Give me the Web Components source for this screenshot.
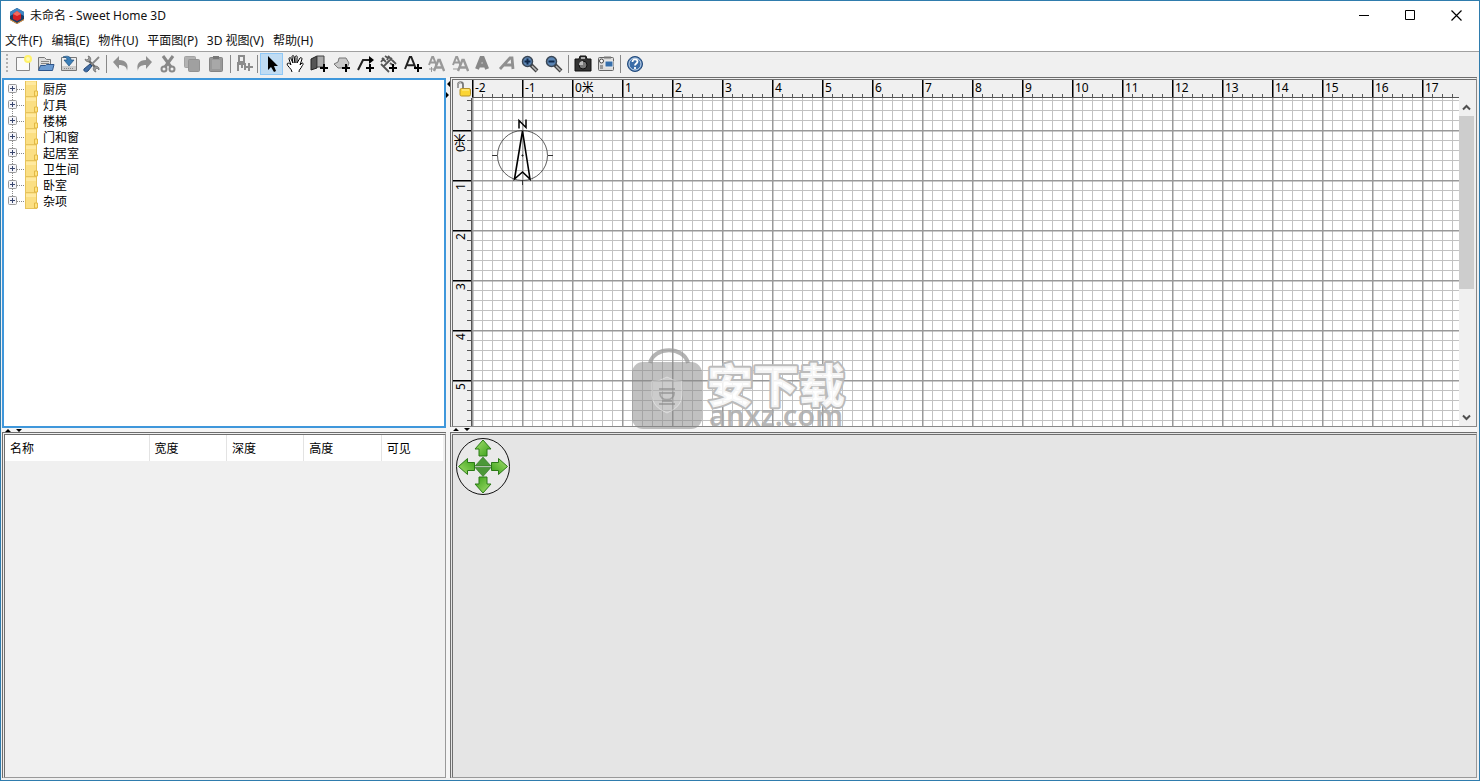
<!DOCTYPE html>
<html lang="zh-CN">
<head>
<meta charset="utf-8">
<title>未命名 - Sweet Home 3D</title>
<style>
html,body{margin:0;height:100%}
body{font:12px/16px "Noto Sans","Noto Sans CJK SC",sans-serif;color:#111;background:#fff}
</style>
</head>
<body>
<home-window>
  <title-bar slot="title">未命名 - Sweet Home 3D</title-bar>
  <menu-bar slot="menu"></menu-bar>
  <tool-bar slot="tools"></tool-bar>
  <catalog-tree slot="catalog"></catalog-tree>
  <furniture-table slot="furniture"></furniture-table>
  <plan-view slot="plan"></plan-view>
  <home-view slot="view"></home-view>
</home-window>
<script>
const define = (name, html) => customElements.define(name, class extends HTMLElement {
  constructor() {
    super();
    const t = document.createElement('template');
    t.innerHTML = `<style>*{box-sizing:border-box}button{font:inherit;color:inherit;border:0;padding:0;background:none}svg{display:block}</style>` + html;
    this.attachShadow({mode: 'open'}).append(t.content.cloneNode(true));
  }
});

const plus = (x, y, c = '#000') => `<path d="M${x-4} ${y}h8M${x} ${y-4}v8" stroke="${c}" stroke-width="2" fill="none"/>`;
const letterA = (x, y, s, c, w = 2.4) => `<path d="M${x} ${y}l${s*.4} ${-s}h${s*.12}l${s*.4} ${s}M${x+s*.2} ${y-s*.32}h${s*.54}" fill="none" stroke="${c}" stroke-width="${w}"/>`;
const magnifier = sign => `<path d="M11 11l6 6" stroke="#444" stroke-width="4"/><path d="M12 12l4.500 4.500" stroke="#bbb" stroke-width="1.500"/><circle cx="7.500" cy="7.500" r="5" fill="#5c86b5" stroke="#3a4654" stroke-width="1.500"/><path d="${sign}" stroke="#102a4c" stroke-width="2"/>`;
const icons = {
  new: ['新建', '<path d="M3.500 3.500h13v13h-13z" fill="#fafafa" stroke="#888"/><circle cx="15" cy="5" r="4" fill="#fff26a"/><circle cx="15" cy="5" r="2" fill="#fffab8"/>'],
  open: ['打开', '<path d="M2.500 16V3.500h6l2 2h4v5" fill="#ddd" stroke="#777"/><path d="M5 7.500h8M5 9.500h8" stroke="#888"/><path d="M2.500 16.500l2-5h5l1-1h7.500l-1.500 6z" fill="#6b9bd2" stroke="#2f568c"/>'],
  save: ['保存', '<path d="M2.500 3.500h15v13h-15z" fill="#eee" stroke="#777"/><path d="M3 12h14v4H3z" fill="#ccc"/><path d="M5 14.500h10" stroke="#888" stroke-dasharray="1 1"/><path d="M4 3c5-2 8 0 8 3h3l-5 6-5-6h3c0-2-1-3-4-3z" fill="#3c7fb8" stroke="#1e517f" stroke-width=".7"/>'],
  prefs: ['偏好设置', '<path d="M6 6l8 8" stroke="#666" stroke-width="2.400"/><path d="M3 5a3 3 0 0 0 5 2a3 3 0 0 0-2-5l1 2-2 2z" fill="#999" stroke="#666" stroke-width=".7"/><path d="M17 16a3 3 0 0 0-5-3a3 3 0 0 0 2 5l-1-2 2-2z" fill="#999" stroke="#666" stroke-width=".7"/><path d="M17 3l-8 8" stroke="#888" stroke-width="1.800"/><path d="M8 10l2 2-4 5c-2 2-5 0-4-2z" fill="#426da5" stroke="#234876"/>'],
  undo: ['撤销', '<path d="M2 8l6-6v4c7 0 10 4 8 11 0-4-3-6-8-6v4z" fill="#909090"/>'],
  redo: ['重做', '<path d="M18 8l-6-6v4c-7 0-10 4-8 11 0-4 3-6 8-6v4z" fill="#909090"/>'],
  cut: ['剪切', '<path d="M5 2l8 11M15 2L7 13" stroke="#888" stroke-width="3"/><circle cx="6" cy="15" r="2.500" fill="none" stroke="#888" stroke-width="2"/><circle cx="14" cy="15" r="2.500" fill="none" stroke="#888" stroke-width="2"/>'],
  copy: ['复制', '<rect x="2.500" y="2.500" width="11" height="11" rx="1" fill="#b2b2b2" stroke="#a2a2a2"/><rect x="6.500" y="5.500" width="11" height="12" rx="1" fill="#a0a0a0" stroke="#929292"/>'],
  paste: ['粘贴', '<rect x="3.500" y="3.500" width="13" height="14" rx="1" fill="#999" stroke="#858585"/><path d="M7 2h6v3H7z" fill="#777"/><path d="M6 6h8v9H6z" fill="#a8a8a8"/>'],
  add: ['添加家具', `<path d="M5 2h5v6H5zM4 8v9M4 10h7v6M8 10v4" fill="none" stroke="#8c8c8c" stroke-width="2"/>${plus(15, 13, '#8c8c8c')}`],
  select: ['选择', '<path d="M6 2v14l3-3 3 5 2-1-2-5h4z" fill="#000"/>'],
  pan: ['平移', '<path d="M7 18c0-3-5-6-5-8 1-2 3 0 4 1L4 5c0-2 2-2 2 0l2 4-1-6c0-2 2-2 2 0l1 6V3c1-2 3-1 2 1v5l3-5c1-1 2 0 2 1l-2 6 2-2c2 0 1 2 0 3-1 3-3 3-3 6" fill="#fff" stroke="#000"/>'],
  wall: ['创建墙', `<path d="M2 5l6-3v12l-6 2z" fill="#555" stroke="#222"/><path d="M8 2h7v11H8z" fill="#aaa" stroke="#444"/>${plus(15, 14)}`],
  room: ['创建房间', `<path d="M2 10l4-2 1-4h7l3 5-2 5H6z" fill="#c8c8c8" stroke="#777"/>${plus(14, 14)}`],
  line: ['创建折线', `<path d="M2 16l5-10h8" fill="none" stroke="#222" stroke-width="2"/><path d="M13 2l5 4-5 4z"/>${plus(14, 14)}`],
  dimension: ['创建尺寸', `<path d="M2 10l8 8M9 2l8 8M4 13l9-9M3 4l4 4M6 2l3 2 -1 2M11 9l4 3M2 8l3-4" fill="none" stroke="#555" stroke-width="1.800"/>${plus(14, 14)}`],
  text: ['添加文字', `${letterA(2, 15, 12, '#222', 2)}${plus(15, 14)}`],
  bigger: ['增大', `${letterA(3, 11, 8, '#999', 2)}${letterA(8, 17, 11, '#999')}<path d="M3 15h5M5.500 13v5" stroke="#999"/>`],
  smaller: ['减小', `${letterA(3, 11, 8, '#999', 2)}${letterA(8, 17, 11, '#999')}<path d="M3 15h5" stroke="#999"/>`],
  bold: ['粗体', letterA(4, 15, 11, '#888', 4)],
  italic: ['斜体', '<path d="M3 15L13 4h2l1 11M7 11h8" fill="none" stroke="#909090" stroke-width="2.800"/>'],
  zoomin: ['放大', magnifier('M4.500 7.500h6M7.500 4.500v6')],
  zoomout: ['缩小', magnifier('M4.500 7.500h6')],
  photo: ['拍照', '<path d="M2 5h4l1-3h6l1 3h4v12H2z" fill="#333" stroke="#111"/><path d="M8 3h4v2H8z" fill="#aaa"/><circle cx="10" cy="11" r="4" fill="#777" stroke="#111"/><path d="M10 11h-4a4 4 0 0 1 4-4z" fill="#bbb"/>'],
  video: ['录像', '<rect x="2.500" y="3.500" width="15" height="13" rx="1" fill="#ddd" stroke="#666"/><circle cx="5.500" cy="7" r="2" fill="#fff" stroke="#444"/><path d="M4 12h3M4 14h3" stroke="#555"/><path d="M8 2.500h7v2H8z" fill="#777"/><path d="M9 7h8v6H9z" fill="#356fac" stroke="#eee"/>'],
  help: ['帮助', '<circle cx="10" cy="10" r="7.500" fill="#3c6da8" stroke="#254b7a"/><circle cx="10" cy="10" r="6" fill="none" stroke="#c6d7ea"/><path d="M7.500 8c0-4 5-3 5-.5 0 2-2.500 2-2.500 4M10 13v2" fill="none" stroke="#fff" stroke-width="1.800"/>']
};
const groups = [[92, 'new open save prefs'], [118, 'undo redo cut copy paste'], [21, 'add'],
  [305, 'select pan wall room line dimension text bigger smaller bold italic zoomin zoomout'], [46, 'photo video'], [23, 'help']];

define('home-window', `<style>
:host{display:grid;grid-template-rows:29px 21px 26px minmax(0,1fr);height:100vh;box-sizing:border-box;border:1px solid #2f7cad;background:#fff}
main{display:grid;grid-template-columns:444fr 4px 1027fr;padding:0 2px 2px 1px;background:#f0f0f0;min-height:0}
section{display:grid;min-height:0;min-width:0}
.l{grid-template-rows:350fr 4px 346fr;padding-top:1px}
.r{grid-template-rows:350fr 5px 346fr}
::slotted(*){min-height:0;min-width:0}
</style><slot name="title"></slot><slot name="menu"></slot><slot name="tools"></slot>
<main><section class="l"><slot name="catalog"></slot><split-handle></split-handle><slot name="furniture"></slot></section>
<split-handle vertical></split-handle>
<section class="r"><slot name="plan"></slot><split-handle></split-handle><slot name="view"></slot></section></main>`);

define('split-handle', `<style>
:host{display:block;background:#f5f5f5;overflow:hidden}
.v{display:none}:host([vertical]) .v{display:block}:host([vertical]) .h{display:none}
</style><svg class="h" width="24" height="5"><path d="M3 4l3-3 3 3zM14 1h6l-3 3z"/></svg>
<svg class="v" width="4" height="24"><path d="M4 4v6L1 7zM0 15v6l3-3z"/></svg>`);

define('title-bar', `<style>
:host{display:flex;align-items:center;padding-left:8px;background:#fff}
span{flex:1;padding-left:5px}
button{width:46px;height:28px;display:grid;place-items:center}
</style><svg width="16" height="18" viewBox="0 0 16 18"><path d="M8 1l7 4v8l-7 4-7-4V5z" fill="#183c66"/><path d="M8 1l7 4v4L8 5 1 9V5z" fill="#3f86c4"/><path d="M1 12l7 4 7-4v1l-7 4-7-4z" fill="#f09a3a"/><path d="M8 4l4 3v5l-4 2-4-2V7z" fill="#d51f24"/><path d="M8 4l4 3-4 2-4-2z" fill="#f36a5e"/></svg>
<span><slot></slot></span>
<button aria-label="最小化"><svg width="11" height="11"><path d="M0 5.500h10" stroke="#000"/></svg></button>
<button aria-label="最大化"><svg width="11" height="11"><path d="M.5.500h9v9h-9z" stroke="#000" fill="none"/></svg></button>
<button aria-label="关闭"><svg width="11" height="11"><path d="M.5.500l10 10M10.500.500l-10 10" stroke="#000" stroke-width="1.200"/></svg></button>`);

define('menu-bar', `<style>
:host{display:block;background:#fff}
nav{display:flex;gap:9px;height:100%;align-items:center;padding-left:4px}
</style><nav>${['文件(F)', '编辑(E)', '物件(U)', '平面图(P)', '3D 视图(V)', '帮助(H)'].map(m => `<button>${m}</button>`).join('')}</nav>`);

define('tool-bar', `<style>
:host{display:flex;align-items:center;background:#f0f0f0;border-top:1px solid #a0a0a0;padding-bottom:2px}
.grip{width:2px;height:20px;margin:0 3px 0 5px;background:repeating-linear-gradient(#b0b0b0 0 2px,#f0f0f0 2px 4px)}
.group{display:flex;justify-content:space-between}
.group+.group{margin-left:6px;position:relative}
.group+.group::before{content:"";position:absolute;left:-3px;top:2px;height:18px;width:1px;background:#888}
button{width:23px;height:22px;display:grid;place-items:center}
.group button:only-child{width:100%}
button.on{background:#c0dcf3;border:1px solid #90c8f6}
</style><div class="grip"></div>${groups.map(([w, names]) => `<div class="group" style="width:${w}px">${names.split(' ').map(n =>
  `<button class="${n === 'select' ? 'on' : ''}" aria-label="${icons[n][0]}"><svg width="18" height="18" viewBox="1 1 18 18">${icons[n][1]}</svg></button>`).join('')}</div>`).join('')}`);

define('catalog-tree', `<style>
:host{display:block;box-sizing:border-box;border:2px solid #3f97db;background:#fff;overflow:auto}
ul{list-style:none;margin:0;padding:1px 0 0 4px}
li{display:flex;height:16px;align-items:center;color:#000}
li span{padding:2px 0 0 5px}
</style><ul role="tree">${['厨房', '灯具', '楼梯', '门和窗', '起居室', '卫生间', '卧室', '杂项'].map((n, i, a) =>
  `<li role="treeitem"><button aria-label="展开"><svg width="17" height="16"><path d="M4.500 ${i ? 0 : 8}V${i === a.length - 1 ? 8 : 16}M9 8.500h8" stroke="#888" stroke-dasharray="1 1"/><rect x=".5" y="3.500" width="8" height="8" rx="1" fill="#f5f5fa" stroke="#999"/><path d="M2 7.500h5M4.500 5v5" stroke="#38466e"/></svg></button>
<svg width="13" height="16"><path d="M0 0h12v16H0z" fill="#e6c35c"/><path d="M1 0h10v15H1z" fill="#fbdf83"/><path d="M1 1h10v3H1z" fill="#ffe99f"/><path d="M9.500 15v-5h3v5z" fill="#ffe480" stroke="#e2b845"/></svg><span>${n}</span></li>`).join('')}</ul>`);

define('furniture-table', `<style>
:host{display:block;box-sizing:border-box;border:1px solid #828282;border-width:3px 1px 1px 3px;border-style:double solid solid double;border-color:#6e6e6e #999 #999 #6e6e6e;background:#f0f0f0;padding-right:2px}
table{width:100%;table-layout:fixed;border-collapse:separate;border-spacing:0}
th{font-weight:400;text-align:left;height:26px;padding:2px 0 0 5px;background:#fff;border-right:1px solid #e3e3e3;color:#000}
th:last-child{border-right-color:#fff}
</style><table><colgroup><col style="width:33%"><col><col><col><col style="width:14%"></colgroup><thead><tr>${['名称', '宽度', '深度', '高度', '可见'].map(t => `<th scope="col">${t}</th>`).join('')}</tr></thead></table>`);

define('plan-view', `<style>
:host{display:grid;position:relative;box-sizing:border-box;grid-template-columns:19px minmax(0,1fr) 17px;grid-template-rows:18px minmax(0,1fr);border:1px solid #888;border-width:3px 1px 1px 3px;border-style:double solid solid double;border-color:#6e6e6e #888 #888 #6e6e6e;background:#f0f0f0}
.lock{display:grid;place-items:center}
.top,.side{display:flex;overflow:hidden;color:#000;line-height:16px;background-color:#f0f0f0}
.top{border-bottom:1px solid #555;background-image:repeating-linear-gradient(90deg,#000 0 1px,#777 1px 2px,transparent 2px 50px),linear-gradient(#f0f0f0 0 14px,transparent 14px),repeating-linear-gradient(90deg,#555 0 1px,transparent 1px 10px)}
.top span{flex:0 0 50px;padding-left:3px}
.side{flex-direction:column;padding-top:32px;border-right:1px solid #555;background-image:repeating-linear-gradient(#000 0 1px,#777 1px 2px,transparent 2px 50px),linear-gradient(90deg,#f0f0f0 0 14px,transparent 14px),repeating-linear-gradient(#555 0 1px,transparent 1px 10px);background-position:0 32px,0 0,0 2px;background-repeat:repeat-x,repeat,repeat;background-size:100% 500px,auto,100% 500px}
.side span{flex:0 0 50px;writing-mode:vertical-rl;transform:rotate(180deg);text-align:right;padding-bottom:3px;margin-right:2px}
.grid{background:#fff;overflow:hidden}
.scroll{grid-column:3;grid-row:2;display:grid;grid-template-rows:18px 173fr 120fr 17px;justify-items:center;align-items:center;padding-right:2px}
.scroll i{background:#cdcdcd;width:15px;height:100%}
.scroll button:last-child{grid-row:4}
brand-mark{position:absolute;left:178px;top:268px}
</style>
<div class="lock"><svg width="16" height="16"><path d="M3 7V3.500c0-3 5-3 5 0V7" fill="none" stroke="#777" stroke-width="1.800"/><path d="M3 7V3.500c0-2 2-2 3-2" fill="none" stroke="#bbb"/><rect x="5" y="7.500" width="10.500" height="7.500" rx="1.500" fill="#fbd535" stroke="#b6922a"/><path d="M7 9h7" stroke="#fff3a0"/></svg></div>
<div class="top">${['-2', '-1', '0米', ...Array.from({length: 17}, (_, i) => i + 1)].map(t => `<span>${t}</span>`).join('')}</div>
<div></div>
<div class="side">${['0米', 1, 2, 3, 4, 5].map(t => `<span>${t}</span>`).join('')}</div>
<div class="grid"><svg width="100%" height="100%">
<defs><pattern id="g" y="32" width="50" height="50" patternUnits="userSpaceOnUse"><path d="M10.500 0v50M20.500 0v50M30.500 0v50M40.500 0v50M0 10.500h50M0 20.500h50M0 30.500h50M0 40.500h50" stroke="#c2c2c2"/><path d="M.75 0v50M0 .75h50" stroke="#999" stroke-width="1.500"/></pattern></defs>
<rect width="100%" height="100%" fill="url(#g)"/>
<g fill="none" stroke="#000"><circle cx="50.500" cy="57.500" r="25" stroke="#333" stroke-width=".8"/><path d="M20 57.500h5M76 57.500h5M50.500 82v5" stroke="#333"/><path d="M50.500 33l7.500 48-7.500-7-8 7z" stroke-width="1.600"/><path d="M47 30.500v-8l7 7v-8" stroke-width="1.500"/><circle cx="50.500" cy="57.500" r=".6"/></g></svg></div>
<div class="scroll"><button aria-label="向上滚动"><svg width="9" height="7"><path d="M1 5.500l3.500-3.500 3.500 3.500" fill="none" stroke="#505050" stroke-width="2"/></svg></button><i></i><button aria-label="向下滚动"><svg width="9" height="7"><path d="M1 1.500l3.500 3.500 3.500-3.500" fill="none" stroke="#505050" stroke-width="2"/></svg></button></div>
<brand-mark></brand-mark>`);

define('brand-mark', `<style>:host{display:block;z-index:2;pointer-events:none}</style>
<svg width="220" height="84"><path d="M19 15c4-17 34-17 38 0" fill="none" stroke="#999" stroke-opacity=".75" stroke-width="4"/>
<rect x="1" y="14" width="70" height="67" rx="11" fill="#888" fill-opacity=".52"/>
<path d="M36 29q8 5 15 4v14q0 12-15 18-15-6-15-18V33q7 1 15-4z" fill="#fff" fill-opacity=".18" stroke="#fff" stroke-opacity=".4"/>
<path d="M28 41h16M29 45h14c0 9-14 9-14 0zM28 56h16M31 53l10 0" fill="none" stroke="#888" stroke-opacity=".6" stroke-width="2"/>
<text x="76" y="54" font-family="Noto Sans CJK SC,sans-serif" font-weight="900" font-size="46" fill="#fff" fill-opacity=".85" stroke="#bbb" stroke-width="4" stroke-linejoin="round" paint-order="stroke">安下载</text>
<text x="78" y="78" font-family="Noto Sans,sans-serif" font-weight="600" font-size="29" fill="#aaa" fill-opacity=".85">anxz.com</text></svg>`);

const arrow = (r, y) => `<path transform="rotate(${r} 27 28.500)" d="M27 ${y}l8 9h-4v7h-8v-7h-4z" fill="url(#a)" stroke="#2b7a16"/>`;
define('home-view', `<style>
:host{display:block;box-sizing:border-box;padding:3px;border:1px solid #888;border-width:3px 1px 1px 3px;border-style:double solid solid double;border-color:#6e6e6e #999 #999 #6e6e6e;background:#e5e5e5}
</style><svg width="54" height="57"><defs><linearGradient id="a" x2="1" y2="1"><stop stop-color="#a6e070"/><stop offset="1" stop-color="#379f16"/></linearGradient></defs>
<ellipse cx="27" cy="28.500" rx="26.500" ry="28" fill="#e9e9e9" stroke="#111"/>${arrow(0, 2)}${arrow(90, 4)}${arrow(180, 2)}${arrow(270, 4)}
<path d="M27 19l8 9H19zM19 29.500h16l-8 9z" fill="#4c9838" stroke="#2b7020" stroke-width=".6"/></svg>`);
</script>
</body>
</html>
